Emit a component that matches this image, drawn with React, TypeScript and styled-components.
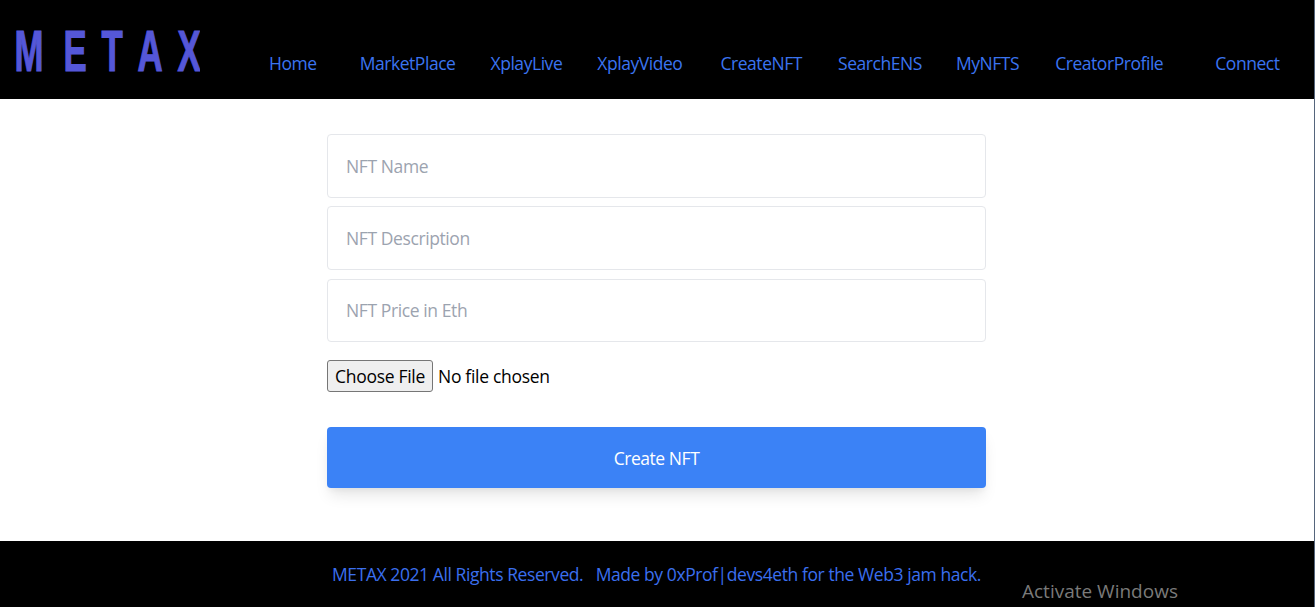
import styled, { createGlobalStyle } from "styled-components";

const GlobalStyle = createGlobalStyle`
    html, body {
        margin: 0;
        padding: 0;
        background: #fff;
    }
    body {
        font-family: "Open Sans", "Noto Sans", sans-serif;
    }
`;

const links = [
    { label: "Home", after: 43 },
    { label: "MarketPlace", after: 35 },
    { label: "XplayLive", after: 35 },
    { label: "XplayVideo", after: 38 },
    { label: "CreateNFT", after: 36 },
    { label: "SearchENS", after: 34 },
    { label: "MyNFTS", after: 36 },
    { label: "CreatorProfile", after: 52 },
    { label: "Connect", after: 0 },
];

const App = () => {
    return (
        <Page>
            <GlobalStyle />
            <Header>
                <Logo width="200" height="99" viewBox="0 0 200 99" role="img" aria-label="METAX">
                    <text
                        transform="scale(0.6 1)"
                        x="24 106 169 229 296"
                        y="71.5"
                        fontFamily="'Liberation Sans', sans-serif"
                        fontWeight="700"
                        fontSize="58"
                        fill="#5557d8"
                        stroke="#5557d8"
                        strokeWidth="1.2"
                    >
                        METAX
                    </text>
                </Logo>
                <Nav>
                    {links.map((link) => (
                        <NavLink key={link.label} $after={link.after}>
                            {link.label}
                        </NavLink>
                    ))}
                </Nav>
            </Header>
            <Main>
                <Form>
                    <TextInput placeholder="NFT Name" />
                    <TextInput placeholder="NFT Description" />
                    <TextInput placeholder="NFT Price in Eth" />
                    <FileInput type="file" />
                    <SubmitButton type="button">Create NFT</SubmitButton>
                </Form>
            </Main>
            <Footer>
                <FooterText>METAX 2021 All Rights Reserved.   Made by 0xProf|devs4eth for the Web3 jam hack.</FooterText>
                <Watermark>Activate Windows</Watermark>
            </Footer>
        </Page>
    );
};

const Page = styled.div`
    display: flex;
    flex-direction: column;
    box-sizing: border-box;
    width: 1315px;
    height: 607px;
    border-right: 1px solid #55657c;
    overflow: hidden;
`;

const Header = styled.header`
    display: flex;
    align-items: flex-start;
    height: 99px;
    background: #000;
`;

const Logo = styled.svg`
    flex: none;
    display: block;
`;

const Nav = styled.nav`
    display: flex;
    margin-left: 69px;
    padding-top: 51px;
`;

const NavLink = styled.a<{ $after: number }>`
    margin-right: ${(p) => p.$after}px;
    color: #3b74f0;
    font-size: 17.5px;
    letter-spacing: -0.45px;
    line-height: 25px;
    white-space: nowrap;
`;

const Main = styled.main`
    flex: 1;
    display: flex;
    justify-content: center;
    padding: 35px 1px 0 0;
`;

const Form = styled.form`
    display: flex;
    flex-direction: column;
    width: 659px;
`;

const TextInput = styled.input`
    box-sizing: border-box;
    width: 100%;
    height: 63.5px;
    margin-bottom: 8.75px;
    padding: 0 18px;
    border: 1px solid #e5e7eb;
    border-radius: 4px;
    outline: none;
    font-family: inherit;
    font-size: 17.5px;
    letter-spacing: -0.4px;
    color: #111;

    &::placeholder {
        color: #9ca3af;
        opacity: 1;
    }
`;

const FileInput = styled.input`
    height: 32px;
    margin-top: 9.5px;
    font-family: inherit;
    font-size: 17.5px;
    letter-spacing: -0.3px;
    line-height: 32px;
    color: #000;

    &::file-selector-button {
        box-sizing: border-box;
        width: 106px;
        height: 32px;
        margin-right: 5px;
        padding: 0;
        border: 1px solid #767676;
        border-radius: 3px;
        background: #efefef;
        color: #000;
        font-family: inherit;
        font-size: 17.5px;
        letter-spacing: -0.3px;
    }
`;

const SubmitButton = styled.button`
    height: 61px;
    margin-top: 35px;
    border: none;
    border-radius: 4px;
    background: #3b82f6;
    box-shadow: 0 10px 15px -3px rgba(0, 0, 0, 0.1), 0 4px 6px -2px rgba(0, 0, 0, 0.05);
    color: #fff;
    font-family: inherit;
    font-size: 17.5px;
    letter-spacing: -0.45px;
`;

const Footer = styled.footer`
    position: relative;
    display: flex;
    justify-content: center;
    height: 66px;
    padding: 21px 1px 0 0;
    box-sizing: border-box;
    background: #000;
`;

const FooterText = styled.p`
    margin: 0;
    color: #3b6fee;
    font-size: 17.5px;
    letter-spacing: -0.42px;
    line-height: 25px;
    white-space: pre;
`;

const Watermark = styled.span`
    position: absolute;
    left: 1022px;
    top: 37px;
    color: #7a7a7a;
    font-size: 19px;
    line-height: 26px;
    white-space: nowrap;
`;

export default App;
